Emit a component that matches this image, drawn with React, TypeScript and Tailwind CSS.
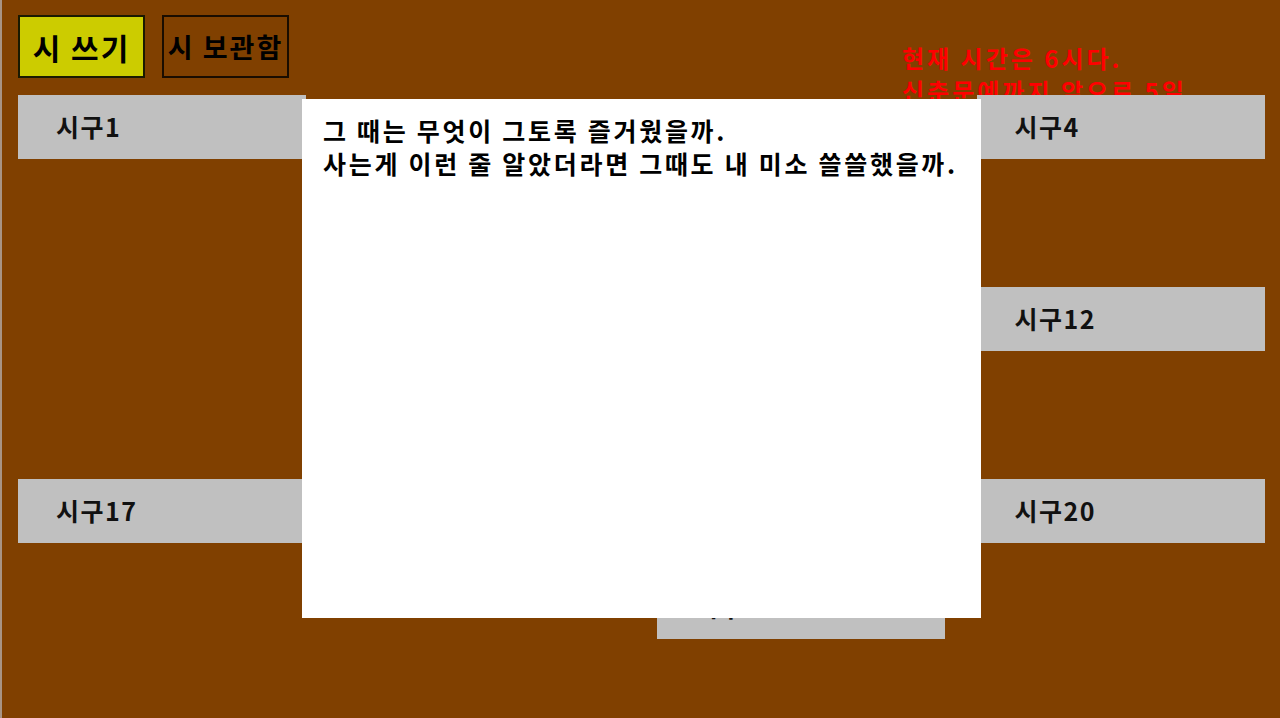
const font = { fontFamily: '"Noto Sans CJK KR", "Noto Sans", sans-serif' }

// cards that currently hold a poem
const visibleCards = [1, 4, 12, 17, 20, 23]

export default function App() {
  const cards = Array.from({ length: 24 }, (_, i) => i + 1)

  return (
    <div className="relative h-[718px] w-full overflow-hidden bg-[#804000] border-l-2 border-[#a89484]" style={font}>
      {/* top buttons */}
      <div className="flex gap-[17px] pl-4 pt-[15px]">
        <button className="h-[63px] w-[127px] border-2 border-[#1a1a00] bg-[#cccc00] text-[30px] font-bold tracking-[2px] text-black leading-none">
          시 쓰기
        </button>
        <button className="h-[63px] w-[127px] border-2 border-[#1a0d00] bg-[#804000] text-[27px] font-bold tracking-[2px] text-black leading-none">
          시 보관함
        </button>
      </div>

      {/* notice */}
      <div className="absolute left-[900px] top-[41px] text-[24px] font-bold tracking-[3px] leading-[33px] text-[#ff0000]">
        <p>현재 시간은 6시다.</p>
        <p>신춘문예까지 앞으로 5일</p>
      </div>

      {/* poem cards */}
      <div className="mt-[17px] grid grid-cols-[repeat(4,288px)] gap-x-[31.5px] gap-y-8 pl-4">
        {cards.map((n) => (
          <div
            key={n}
            className={`relative flex h-16 items-center bg-[#c0c0c0] pl-[38px] text-[25px] font-bold tracking-[1.5px] text-[#111] ${
              visibleCards.includes(n) ? '' : 'invisible'
            }`}
          >
            시구{n}
          </div>
        ))}
      </div>

      {/* open poem */}
      <div className="absolute left-[300px] top-[99px] z-10 h-[519px] w-[679px] bg-white px-[21px] pt-[15px] text-[25px] font-bold tracking-[2.7px] leading-[33px] text-black">
        <p>그 때는 무엇이 그토록 즐거웠을까.</p>
        <p>사는게 이런 줄 알았더라면 그때도 내 미소 쓸쓸했을까.</p>
      </div>
    </div>
  )
}
